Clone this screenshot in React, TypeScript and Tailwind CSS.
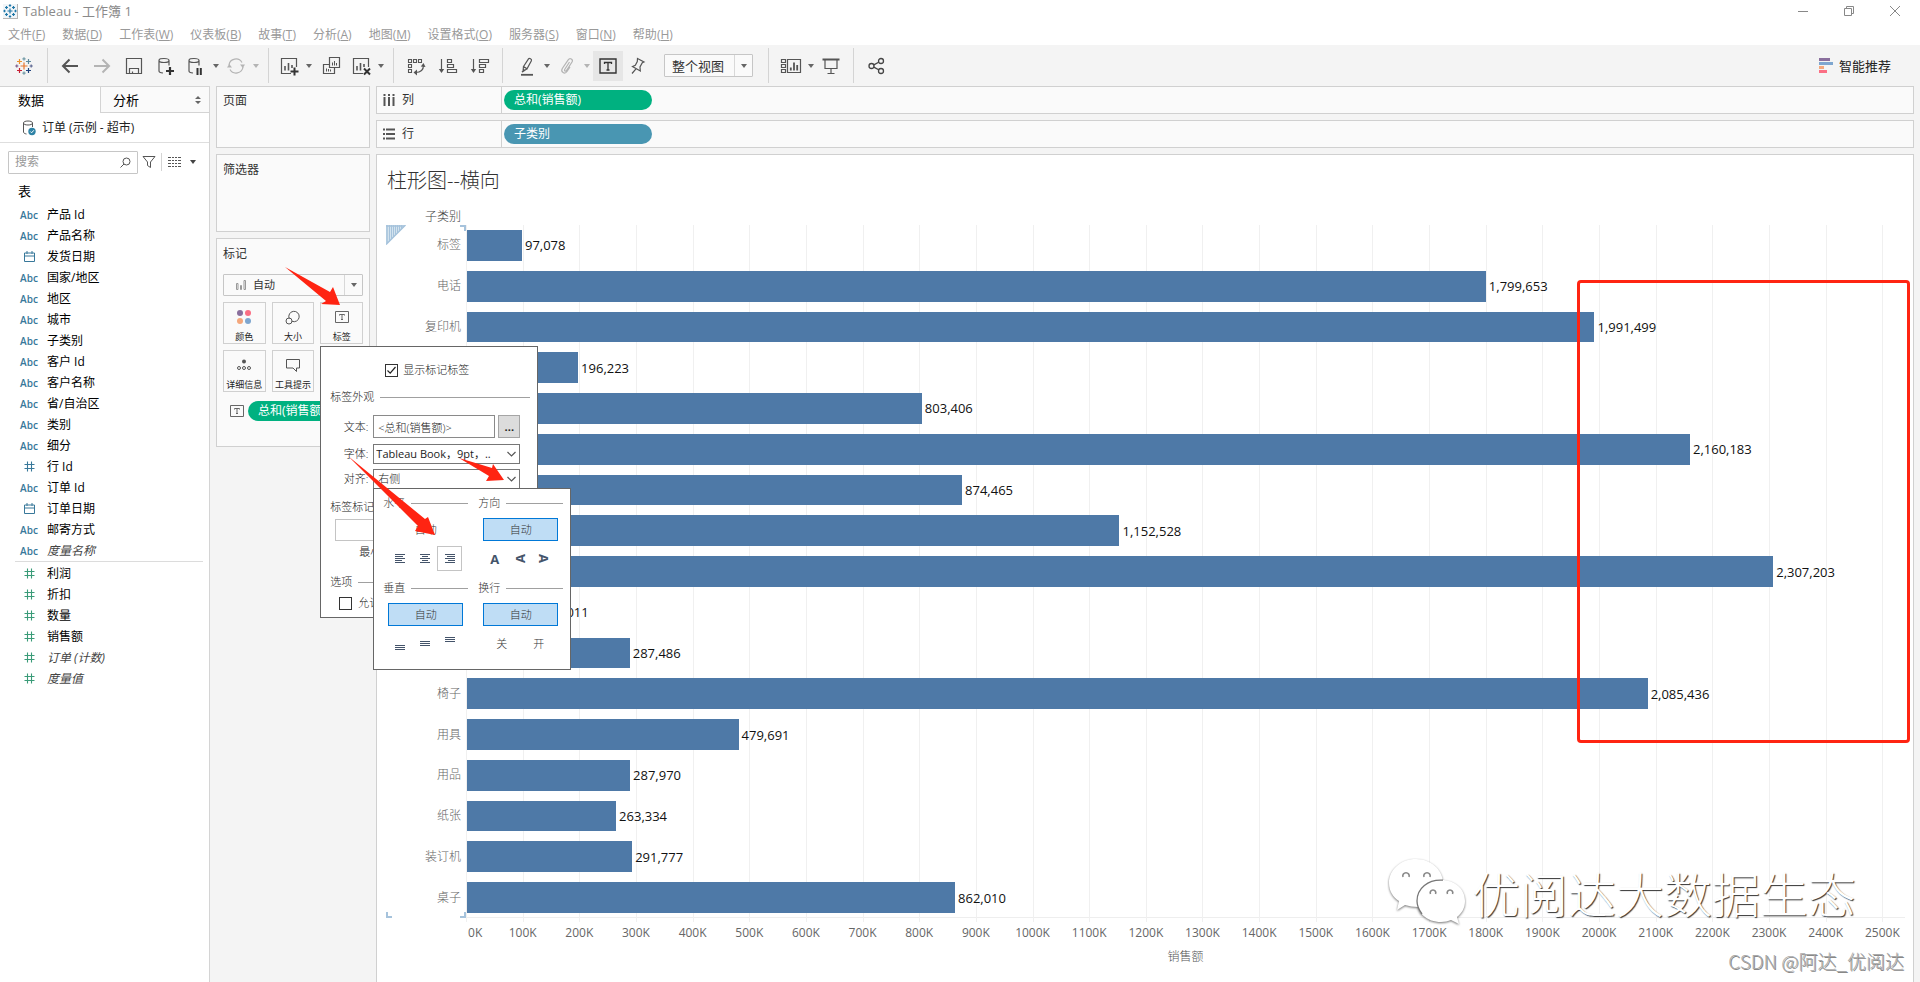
import type { ReactNode } from "react";

const MENUS: [string, string][] = [
  ["文件", "F"],
  ["数据", "D"],
  ["工作表", "W"],
  ["仪表板", "B"],
  ["故事", "T"],
  ["分析", "A"],
  ["地图", "M"],
  ["设置格式", "O"],
  ["服务器", "S"],
  ["窗口", "N"],
  ["帮助", "H"],
];

type FieldKind = "text" | "date" | "number";
type Field = { name: string; kind: FieldKind; italic?: boolean };

const DIMENSIONS: Field[] = [
  { name: "产品 Id", kind: "text" },
  { name: "产品名称", kind: "text" },
  { name: "发货日期", kind: "date" },
  { name: "国家/地区", kind: "text" },
  { name: "地区", kind: "text" },
  { name: "城市", kind: "text" },
  { name: "子类别", kind: "text" },
  { name: "客户 Id", kind: "text" },
  { name: "客户名称", kind: "text" },
  { name: "省/自治区", kind: "text" },
  { name: "类别", kind: "text" },
  { name: "细分", kind: "text" },
  { name: "行 Id", kind: "number" },
  { name: "订单 Id", kind: "text" },
  { name: "订单日期", kind: "date" },
  { name: "邮寄方式", kind: "text" },
  { name: "度量名称", kind: "text", italic: true },
];

const MEASURES: Field[] = [
  { name: "利润", kind: "number" },
  { name: "折扣", kind: "number" },
  { name: "数量", kind: "number" },
  { name: "销售额", kind: "number" },
  { name: "订单 (计数)", kind: "number", italic: true },
  { name: "度量值", kind: "number", italic: true },
];

const SALES: { name: string; value: number }[] = [
  { name: "标签", value: 97078 },
  { name: "电话", value: 1799653 },
  { name: "复印机", value: 1991499 },
  { name: "", value: 196223 },
  { name: "", value: 803406 },
  { name: "", value: 2160183 },
  { name: "", value: 874465 },
  { name: "", value: 1152528 },
  { name: "", value: 2307203 },
  { name: "", value: 125011 },
  { name: "", value: 287486 },
  { name: "椅子", value: 2085436 },
  { name: "用具", value: 479691 },
  { name: "用品", value: 287970 },
  { name: "纸张", value: 263334 },
  { name: "装订机", value: 291777 },
  { name: "桌子", value: 862010 },
];

const AXIS_MAX = 2540000;
const TICKS = Array.from({ length: 26 }, (_, i) => i * 100);
const pct = (v: number) => `${(v / AXIS_MAX) * 100}%`;

/* ---------- icons ---------- */

function Icon({ w = 20, h = 20, children, color = "text-[#555]" }: { w?: number; h?: number; children: ReactNode; color?: string }) {
  return (
    <svg width={w} height={h} viewBox={`0 0 ${w} ${h}`} fill="none" stroke="currentColor" className={`shrink-0 ${color}`} aria-hidden="true">
      {children}
    </svg>
  );
}

function Caret({ color = "text-[#666]" }: { color?: string }) {
  return (
    <svg width="6" height="4" viewBox="0 0 6 4" className={color} aria-hidden="true">
      <path d="M0 0h6L3 4z" fill="currentColor" />
    </svg>
  );
}

const crossPath = (x: number, y: number, r: number) => `M${x - r} ${y}h${2 * r}M${x} ${y - r}v${2 * r}`;

function TableauMark() {
  const crosses: [number, number, number, string][] = [
    [9, 9, 3.5, "#e8762d"],
    [4.5, 4.5, 2.5, "#eb912c"],
    [13.5, 4.5, 2.5, "#5b879b"],
    [4.5, 13.5, 2.5, "#c72035"],
    [13.5, 13.5, 2.5, "#1f447e"],
    [9, 1.8, 1.6, "#7099a6"],
    [9, 16.2, 1.6, "#7199a6"],
    [1.8, 9, 1.6, "#7c5a8a"],
    [16.2, 9, 1.6, "#5c6692"],
  ];
  return (
    <Icon w={18} h={18}>
      {crosses.map(([x, y, r, c]) => (
        <path key={`${x}-${y}`} d={crossPath(x, y, r)} stroke={c} strokeWidth="1.2" />
      ))}
    </Icon>
  );
}

function WindowMark() {
  const crosses: [number, number, number][] = [
    [7, 7, 2.5], [3.5, 3.5, 1.5], [10.5, 3.5, 1.5], [3.5, 10.5, 1.5], [10.5, 10.5, 1.5],
    [7, 1.5, 1.2], [7, 12.5, 1.2], [1.5, 7, 1.2], [12.5, 7, 1.2],
  ];
  return (
    <span className="flex size-[15px] items-center justify-center border-r border-b border-[#b5b5b5] bg-[#f1f5f8]">
      <Icon w={14} h={14} color="text-[#1f77a8]">
        {crosses.map(([x, y, r]) => (
          <path key={`${x}-${y}`} d={crossPath(x, y, r)} strokeWidth="1.2" />
        ))}
      </Icon>
    </span>
  );
}

const Back = () => (
  <Icon><path d="M18 10H3M9.5 3.5 3 10l6.5 6.5" strokeWidth="2" /></Icon>
);
const Forward = () => (
  <Icon color="text-[#b4b4b4]"><path d="M2 10h15M10.5 3.5 17 10l-6.5 6.5" strokeWidth="2" /></Icon>
);
const Save = () => (
  <Icon><path d="M2.5 2.5h15v15h-15zM5.5 17.5v-5h9v5M8.5 17.5v-2" strokeWidth="1.2" /></Icon>
);
const cylinder = "M3 4.5C3 3 5.200 2.500 8 2.500s5 .5 5 2-2.200 2-5 2-5-.5-5-2zM3 4.500v10.500c0 1.200 1.600 1.900 4 2M13 4.500v5";
const DbPlus = () => (
  <Icon><path d={cylinder} strokeWidth="1.200" /><path d="M14 11v8M10 15h8" stroke="#333" strokeWidth="2.200" /></Icon>
);
const DbPause = () => (
  <Icon><path d={cylinder} strokeWidth="1.200" /><path d="M11.500 12v7M14.800 12v7" stroke="#333" strokeWidth="2" /></Icon>
);
const Refresh = () => (
  <Icon color="text-[#b4b4b4]">
    <path d="M3 9a7 7 0 0 1 13-2.500M17 11a7 7 0 0 1-13 2.500" strokeWidth="1.200" />
    <path d="M14 8.500h5L16.800 12zM1 11.500h5L3.300 8z" fill="currentColor" stroke="none" />
  </Icon>
);
const NewSheet = () => (
  <Icon>
    <path d="M12 17.500H2.500v-15h15v8.500" strokeWidth="1.200" />
    <path d="M6 14.500V10M9.500 14.500V7M13 12V9" strokeWidth="1.600" />
    <path d="M15.500 11.500v8M11.500 15.500h8" stroke="#333" strokeWidth="2" />
  </Icon>
);
const Duplicate = () => (
  <Icon>
    <path d="M8.500 1.500h10v10h-10zM8 8.500H2.500v9h11v-5.500" strokeWidth="1.200" />
    <path d="M11.500 9.500v-3M13.500 9.500v-4.500M15.500 9.500V7M5.500 15.500v-3M7.500 15.500v-2.500M9.500 15.500v-2" strokeWidth="1" />
  </Icon>
);
const ClearSheet = () => (
  <Icon>
    <path d="M12 17.500H2.500v-15h15v8.500" strokeWidth="1.200" />
    <path d="M6 14.500V10M9.500 14.500V7M13 11V8" strokeWidth="1.600" />
    <path d="m13 12.500 6 6M19 12.500l-6 6" stroke="#333" strokeWidth="2" />
  </Icon>
);
const Swap = () => (
  <Icon>
    <path d="M2.500 3.500h3v3h-3zM7.500 3.500h3v3h-3zM12.500 3.500h3v3h-3zM2.500 8.500h3v3h-3zM2.500 13.500h3v3h-3z" strokeWidth="1.100" />
    <path d="M17.500 9c0 5-2.500 7.500-8 7.500" strokeWidth="1.200" />
    <path d="M14.800 10.500 17.500 7l2 4zM11 13.500v6l-3.500-3z" fill="currentColor" stroke="none" />
  </Icon>
);
const SortAsc = () => (
  <Icon>
    <path d="M3.500 3v12M9.500 3.500h4v3h-4zM9.500 8.500h6v3h-6zM9.500 13.500h9v3h-9z" strokeWidth="1.200" />
    <path d="M.8 13h5.400L3.500 17z" fill="currentColor" stroke="none" />
  </Icon>
);
const SortDesc = () => (
  <Icon>
    <path d="M3.500 3v12M9.500 3.500h9v3h-9zM9.500 8.500h6v3h-6zM9.500 13.500h4v3h-4z" strokeWidth="1.200" />
    <path d="M.8 13h5.400L3.500 17z" fill="currentColor" stroke="none" />
  </Icon>
);
const Pen = () => (
  <Icon>
    <path d="M8.500 10.500 13.500 2.800c.8-1.200 3.600.6 2.900 1.900L12 12.800zM8.500 10.500 8 15.500l4-2.700M9.500 13.500 7 16" strokeWidth="1.200" />
    <path d="M6 18.800h12" strokeWidth="1.800" />
  </Icon>
);
const Clip = () => (
  <Icon color="text-[#b4b4b4]">
    <path d="M12.500 6 7.800 13.300c-1 1.600.9 2.600 1.800 1.100L15 6c1.500-2.500-2-4.800-3.800-2.200L5.300 12.500c-2 3.300 2.400 6.300 4.700 3l3-4.600" strokeWidth="1.200" />
  </Icon>
);
const TextBox = ({ color = "text-[#333]" }: { color?: string }) => (
  <Icon w={18} h={16} color={color}>
    <path d="M1 1h16v14H1z" strokeWidth="1.400" />
    <path d="M5.500 6V4.500h7V6M9 4.500v7.500M7.500 12h3" strokeWidth="1.300" />
  </Icon>
);
const SmallTextBox = () => (
  <Icon w={14} h={12} color="text-[#666]">
    <path d="M.5.5h13v11H.5z" />
    <path d="M4.500 4.500v-1h5v1M7 3.500v5M6 8.500h2" />
  </Icon>
);
const Pin = () => (
  <Icon>
    <path d="m8.500 2.500 6.500 3.500-1.700.8-2.300 4.200.3 4-7.800-4.500 2.800-1.300 2-3.700zM7 12.800 3 17.500" strokeWidth="1.200" />
  </Icon>
);
const Cards = () => (
  <Icon w={22} h={20}>
    <path d="M1.500 3.500h4v3h-4zM1.500 8.500h4v3h-4zM1.500 13.500h4v3h-4zM7.500 3.500h13v13h-13z" strokeWidth="1.200" />
    <path d="M10.800 14.500v-3M14 14.500V6.500M17.200 14.500V9" strokeWidth="1.800" />
  </Icon>
);
const Present = () => (
  <Icon>
    <path d="M1.500 3.500h17" strokeWidth="2" />
    <path d="M4 4v8.500h12V4M10 12.500v5M6.500 17.500h7" strokeWidth="1.200" />
  </Icon>
);
const Share = () => (
  <Icon color="text-[#444]">
    <circle cx="5.500" cy="10" r="2.500" strokeWidth="1.300" />
    <circle cx="15" cy="5" r="2.500" strokeWidth="1.300" />
    <circle cx="15" cy="15" r="2.500" strokeWidth="1.300" />
    <path d="m7.800 8.900 4.900-2.700M7.800 11.100l4.900 2.700" strokeWidth="1.300" />
  </Icon>
);

/* ---------- window chrome ---------- */

function TitleBar() {
  return (
    <header className="flex h-[22px] items-center justify-between pl-[3px] pr-[19px] text-[#8a8a8a]">
      <div className="flex items-center gap-[5px] text-[13px] leading-[20px]">
        <WindowMark />
        <h1>Tableau - 工作簿 1</h1>
      </div>
      <div className="flex gap-[34px]">
        <button aria-label="最小化"><Icon w={12} h={12} color="text-[#888]"><path d="M1 6.500h10" /></Icon></button>
        <button aria-label="还原"><Icon w={12} h={12} color="text-[#888]"><path d="M1.500 3.500h7v7h-7zM3.500 3.500v-2h7v7h-2" /></Icon></button>
        <button aria-label="关闭"><Icon w={12} h={12} color="text-[#888]"><path d="m1 1 10 10M11 1 1 11" /></Icon></button>
      </div>
    </header>
  );
}

function MenuBar() {
  return (
    <nav className="flex h-[23px] items-center gap-[17px] pl-2 pt-[2px] text-xs text-[#999]">
      {MENUS.map(([label, key]) => (
        <button key={key} className="whitespace-nowrap">
          {label}(<u>{key}</u>)
        </button>
      ))}
    </nav>
  );
}

const Separator = () => <span className="mx-[6px] h-[35px] w-px shrink-0 bg-[#d4d4d4]" />;

function Tool({ label, wide = false, children }: { label: string; wide?: boolean; children: ReactNode }) {
  return (
    <button aria-label={label} className={`flex h-[30px] shrink-0 items-center justify-center ${wide ? "w-8" : "w-7"}`}>
      {children}
    </button>
  );
}

function Drop({ muted = false }: { muted?: boolean }) {
  return (
    <button aria-label="更多" className="flex h-[30px] w-3 shrink-0 items-center justify-center">
      <Caret color={muted ? "text-[#b4b4b4]" : "text-[#666]"} />
    </button>
  );
}

function Toolbar() {
  return (
    <div className="flex h-[41px] items-center bg-[#f4f4f4] pr-[29px]">
      <button aria-label="起始页" className="flex w-[47px] shrink-0 justify-center"><TableauMark /></button>
      <span className="mr-[6px] h-[35px] w-px bg-[#d4d4d4]" />
      <Tool label="后退" wide><Back /></Tool>
      <Tool label="前进" wide><Forward /></Tool>
      <Tool label="保存" wide><Save /></Tool>
      <Tool label="新建数据源" wide><DbPlus /></Tool>
      <Tool label="暂停自动更新"><DbPause /></Tool>
      <Drop />
      <Tool label="刷新"><Refresh /></Tool>
      <Drop muted />
      <Separator />
      <Tool label="新建工作表"><NewSheet /></Tool>
      <Drop />
      <Tool label="复制" wide><Duplicate /></Tool>
      <Tool label="清除工作表"><ClearSheet /></Tool>
      <Drop />
      <Separator />
      <Tool label="交换行和列" wide><Swap /></Tool>
      <Tool label="升序排序" wide><SortAsc /></Tool>
      <Tool label="降序排序" wide><SortDesc /></Tool>
      <Separator />
      <Tool label="突出显示" wide><Pen /></Tool>
      <Drop />
      <Tool label="对成员进行分组"><Clip /></Tool>
      <Drop muted />
      <button aria-label="显示标记标签" className="flex size-[30px] shrink-0 items-center justify-center bg-[#e6e6e6]"><TextBox /></button>
      <Tool label="固定轴" wide><Pin /></Tool>
      <div className="relative ml-[9px] mr-[9px] flex h-[23px] w-[89px] shrink-0 items-stretch rounded-[1px] border border-[#c6c6c6] bg-[#fafafa]">
        <select aria-label="适合" className="w-full appearance-none pl-[7px] text-[13px] leading-[20px] text-[#333]">
          <option>整个视图</option>
        </select>
        <span className="pointer-events-none absolute inset-y-0 right-0 flex w-[18px] items-center justify-center border-l border-[#d8d8d8]"><Caret /></span>
      </div>
      <Separator />
      <div className="flex px-[2px]">
        <Tool label="显示/隐藏卡"><Cards /></Tool>
        <Drop />
        <Tool label="演示模式"><Present /></Tool>
      </div>
      <Separator />
      <Tool label="共享工作簿" wide><Share /></Tool>
      <button className="ml-auto flex shrink-0 items-center gap-[6px] text-[13px] leading-[20px] text-[#222]">
        <svg width="14" height="15" viewBox="0 0 14 15" aria-hidden="true">
          <path d="M0 0h11v3H0z" fill="#8a6f9d" />
          <path d="M0 4h14v3H0z" fill="#7ea6cf" />
          <path d="M0 8h5v3H0z" fill="#f4a77c" />
          <path d="M0 12h8v3H0z" fill="#fb6f84" />
        </svg>
        智能推荐
      </button>
    </div>
  );
}

/* ---------- data pane ---------- */

function FieldIcon({ kind, tone }: { kind: FieldKind; tone: string }) {
  if (kind === "text") return <span className={`text-[10px] font-semibold leading-[12px] ${tone}`}>Abc</span>;
  if (kind === "date")
    return (
      <Icon w={11} h={11} color={tone}>
        <path d="M.5 2h10v8.500H.5zM.5 5h10M3 0v3M8 0v3" />
      </Icon>
    );
  return (
    <Icon w={11} h={11} color={tone}>
      <path d="M.5 3.500h10M.5 7.500h10M3.500 .5v10M7.500 .5v10" strokeWidth="1.100" />
    </Icon>
  );
}

function FieldList({ fields, tone }: { fields: Field[]; tone: string }) {
  return (
    <ul className="text-xs">
      {fields.map((f) => (
        <li key={f.name} className="flex h-[21px] items-center gap-1 pl-[15px]">
          <span className="flex w-7 items-center justify-center"><FieldIcon kind={f.kind} tone={tone} /></span>
          <span className={f.italic ? "italic text-[#444]" : "text-black"}>{f.name}</span>
        </li>
      ))}
    </ul>
  );
}

function DataPane() {
  return (
    <aside className="flex w-[210px] shrink-0 flex-col border-r border-[#d4d4d4] bg-white">
      <div className="flex h-[27px] text-[13px] leading-[20px] text-black">
        <button className="w-[100px] shrink-0 border-t border-[#d4d4d4] pl-[18px] text-left">数据</button>
        <button className="flex flex-1 items-center justify-between border-b border-l border-t border-[#d4d4d4] bg-[#fafafa] pl-3 pr-2">
          分析
          <svg width="6" height="8" viewBox="0 0 6 8" className="text-[#666]" aria-hidden="true">
            <path d="M0 3h6L3 0zM0 5h6L3 8z" fill="currentColor" />
          </svg>
        </button>
      </div>
      <div className="flex h-[30px] items-center gap-[5px] border-b border-[#dedede] pl-[21px] text-xs text-[#222]">
        <Icon w={16} h={16}>
          <path d="M2.500 3c0-1.300 1.800-2 4.500-2s4.500.7 4.500 2-1.800 2-4.500 2-4.500-.7-4.500-2zM2.500 3v9c0 1 1.200 1.700 3 2M11.500 3v4" />
          <circle cx="11" cy="11.500" r="3.700" fill="#2e83a6" stroke="none" />
          <path d="m9.300 11.500 1.300 1.300 2.200-2.500" stroke="#fff" />
        </Icon>
        订单 (示例 - 超市)
      </div>
      <div className="flex h-[38px] items-center pl-2">
        <label className="flex h-[23px] w-[130px] items-center rounded-[1px] border border-[#c6c6c6] pl-[6px] pr-[6px]">
          <input aria-label="搜索" placeholder="搜索" className="w-full min-w-0 text-xs outline-none placeholder:text-[#999]" />
          <Icon w={11} h={11}><circle cx="6.500" cy="4.500" r="3.500" /><path d="M4 7 .5 10.500" /></Icon>
        </label>
        <button aria-label="筛选" className="ml-1">
          <Icon w={14} h={14}><path d="M1 1.500h12L8.500 7v5.500l-3-2V7z" /></Icon>
        </button>
        <span className="ml-[5px] h-[18px] w-px bg-[#d4d4d4]" />
        <button aria-label="视图" className="ml-[6px] flex items-center gap-[9px]">
          <Icon w={13} h={10}><path d="M0 .5h13M0 3.500h13M0 6.500h13M0 9.500h13" strokeDasharray="3 1 2 1 2 1 3" /></Icon>
          <Caret color="text-[#444]" />
        </button>
      </div>
      <h2 className="pl-[18px] text-[13px] leading-[20px] text-black">表</h2>
      <div className="pt-[3px]">
        <FieldList fields={DIMENSIONS} tone="text-[#38789a]" />
        <hr className="mb-px ml-[15px] mr-[6px] border-[#dcdcdc]" />
        <FieldList fields={MEASURES} tone="text-[#3a9b78]" />
      </div>
    </aside>
  );
}

/* ---------- label dialogs ---------- */

function Legend({ children }: { children: ReactNode }) {
  return (
    <div className="flex h-[14px] items-center gap-[6px]">
      <span className="shrink-0">{children}</span>
      <span className="h-px flex-1 bg-[#a0a0a0]" />
    </div>
  );
}

function AutoButton({ plain = false }: { plain?: boolean }) {
  return (
    <button className={`ml-[5px] mt-2 h-[23px] w-[75px] border ${plain ? "border-transparent" : "border-[#0078d7] bg-[#bfddf5]"}`}>自动</button>
  );
}

const ALIGN_LINES = [
  "M0 .5h10M0 2.500h8M0 4.500h10M0 6.500h7M0 8.500h10",
  "M0 .5h10M2 2.500h6M0 4.500h10M2 6.500h6M0 8.500h10",
  "M0 .5h10M2 2.500h8M0 4.500h10M3 6.500h7M0 8.500h10",
];

function AlignmentPopup() {
  return (
    <div className="absolute left-[52px] top-[141px] z-10 grid h-[182px] w-[198px] grid-cols-[85px_85px] content-start gap-x-[10px] border border-[#666] bg-white px-[9px] pt-[7px] font-light text-[#333]">
      <section className="h-[85px]">
        <Legend>水平</Legend>
        <AutoButton plain />
        <div className="mt-[5px] flex pl-1">
          {ALIGN_LINES.map((d, i) => (
            <button key={d} aria-label={["左侧", "居中", "右侧"][i]} className={`flex size-[25px] items-center justify-center border ${i === 2 ? "border-[#c4c4c4]" : "border-transparent"}`}>
              <Icon w={10} h={9} color="text-[#44546a]"><path d={d} /></Icon>
            </button>
          ))}
        </div>
      </section>
      <section className="h-[85px]">
        <Legend>方向</Legend>
        <AutoButton />
        <div className="mt-[5px] flex pl-1 text-[13px] font-bold leading-[20px] text-[#44546a]">
          <button className="size-[25px]">A</button>
          <button className="size-[25px] -rotate-90">A</button>
          <button className="size-[25px] rotate-90">A</button>
        </div>
      </section>
      <section>
        <Legend>垂直</Legend>
        <AutoButton />
        <div className="mt-[5px] flex pl-1">
          {["items-end", "items-center", "items-start"].map((a, i) => (
            <button key={a} aria-label={["底部", "中部", "顶部"][i]} className={`flex size-[25px] justify-center py-[6px] ${a}`}>
              <Icon w={10} h={5} color="text-[#44546a]"><path d="M0 .5h10M0 2.500h10M0 4.500h10" /></Icon>
            </button>
          ))}
        </div>
      </section>
      <section>
        <Legend>换行</Legend>
        <AutoButton />
        <div className="mt-[5px] flex h-[25px] items-center gap-[26px] pl-[18px]">
          <button>关</button>
          <button>开</button>
        </div>
      </section>
    </div>
  );
}

function Chevron() {
  return (
    <span className="pointer-events-none absolute inset-y-0 right-1 flex items-center">
      <Icon w={9} h={6}><path d="m.5 1 4 4 4-4" strokeWidth="1.200" /></Icon>
    </span>
  );
}

function LabelDialog() {
  return (
    <div className="absolute left-0 top-[44px] z-10 h-[272px] w-[218px] border border-[#666] bg-white pl-[9px] pr-[7px] text-left text-[11px] leading-[14px] text-[#222]">
      <div className="font-light">
        <label className="flex items-center gap-[6px] pl-[55px] pt-4">
          <input type="checkbox" defaultChecked className="size-[13px] appearance-none border border-[#333]" />
          <svg width="11" height="11" viewBox="0 0 11 11" className="-ml-[18px] text-[#222]" aria-hidden="true">
            <path d="m1.500 5.500 2.700 2.700L9.500 2" fill="none" stroke="currentColor" strokeWidth="1.200" />
          </svg>
          显示标记标签
        </label>
        <div className="mt-[13px]"><Legend>标签外观</Legend></div>
        <div className="mt-[11px] grid grid-cols-[38px_147px] items-center gap-x-[5px]">
          <label htmlFor="label-text" className="text-right">文本:</label>
          <div className="flex gap-[3px]">
            <input id="label-text" defaultValue="<总和(销售额)>" className="h-[23px] w-[122px] border border-[#8a8a8a] pl-1" />
            <button aria-label="编辑文本" className="h-[23px] w-[22px] border border-[#a5a5a5] bg-[#dcdcdc] text-[11px] font-bold leading-[14px]">...</button>
          </div>
          <label htmlFor="label-font" className="pt-[6px] text-right">字体:</label>
          <div className="relative mt-[6px]">
            <select id="label-font" className="h-5 w-full appearance-none border border-[#777] pl-[2px] font-normal">
              <option>Tableau Book，9pt，..</option>
            </select>
            <Chevron />
          </div>
          <label htmlFor="label-align" className="pt-[5px] text-right">对齐:</label>
          <div className="relative mt-[5px]">
            <select id="label-align" className="h-5 w-full appearance-none border border-[#777] pl-1">
              <option>右侧</option>
            </select>
            <Chevron />
          </div>
        </div>
        <div className="mt-[11px]">标签标记</div>
        <div className="ml-[5px] mt-[5px] h-[22px] w-[60px] border border-[#c4c4c4]" />
        <div className="mt-1 pl-[29px]">最小</div>
        <div className="mt-4"><Legend>选项</Legend></div>
        <label className="flex items-center gap-[6px] pl-[9px] pt-[7px]">
          <input type="checkbox" className="size-[13px] appearance-none border border-[#333]" />
          允许
        </label>
      </div>
      <AlignmentPopup />
      <svg width="224" height="274" viewBox="284 266 224 274" className="pointer-events-none absolute left-[-38px] top-[-82px] z-20" aria-hidden="true">
        <g fill="#ff2412">
          <path d="M286 268 331 293 334 288 341 306 322 305 327 302z" />
          <path d="M460 459 493 469 494 465 505 481 487 482 490 477z" />
          <path d="M349 457 426 520 429 518 436 536 416 532 419 527z" />
        </g>
      </svg>
    </div>
  );
}

/* ---------- cards ---------- */

function MarkButton({ label, icon }: { label: string; icon: ReactNode }) {
  return (
    <button className="flex h-[42px] w-full flex-col items-center justify-between whitespace-nowrap border border-[#d0d0d0] bg-[#fafafa] pt-[6px] text-[9px] leading-[13px] text-[#222]">
      <span className="flex h-4 items-center">{icon}</span>
      {label}
    </button>
  );
}

function CardColumn() {
  return (
    <div className="flex w-[166px] shrink-0 flex-col gap-[6px] px-[6px] text-xs text-[#333]">
      <section className="h-[62px] border border-[#d0d0d0] bg-[#fafafa] pl-[6px] pt-[6px]">页面</section>
      <section className="h-[78px] border border-[#d0d0d0] bg-[#fafafa] pl-[6px] pt-[7px]">筛选器</section>
      <section className="h-[209px] border border-[#d0d0d0] bg-[#fafafa] px-[6px] pt-[7px]">
        <h2>标记</h2>
        <div className="relative mt-3 h-[22px] rounded-[1px] border border-[#c6c6c6]">
          <span className="pointer-events-none absolute inset-y-0 left-[12px] flex items-center">
            <Icon w={10} h={10} color="text-[#999]"><path d="M.5 3.500h1.500v6H.5zM4.500 5.500h1v4h-1zM8 .5h1.500v9H8z" /></Icon>
          </span>
          <select aria-label="标记类型" className="h-full w-full appearance-none pl-[29px] text-[11px] leading-[14px]">
            <option>自动</option>
          </select>
          <span className="pointer-events-none absolute inset-y-0 right-0 flex w-[18px] items-center justify-center border-l border-[#d8d8d8]"><Caret /></span>
        </div>
        <div className="mt-[6px] grid grid-cols-3 gap-[6px]">
          <MarkButton
            label="颜色"
            icon={
              <svg width="14" height="14" viewBox="0 0 14 14" aria-hidden="true">
                <circle cx="3" cy="3" r="3" fill="#8a6f9d" />
                <circle cx="11" cy="3" r="3" fill="#fb6f84" />
                <circle cx="3" cy="11" r="3" fill="#f4a77c" />
                <circle cx="11" cy="11" r="3" fill="#7ea6cf" />
              </svg>
            }
          />
          <MarkButton
            label="大小"
            icon={<Icon w={15} h={15}><path d="M4.200 8.500A5.200 5.200 0 1 1 7 11.300" /><circle cx="4" cy="11" r="3" /></Icon>}
          />
          <div className="relative">
            <MarkButton label="标签" icon={<SmallTextBox />} />
            <LabelDialog />
          </div>
          <MarkButton
            label="详细信息"
            icon={
              <Icon w={14} h={12}>
                <circle cx="7" cy="2.500" r="2" fill="currentColor" stroke="none" />
                <circle cx="2" cy="9" r="1.500" /><circle cx="7" cy="9" r="1.500" /><circle cx="12" cy="9" r="1.500" />
              </Icon>
            }
          />
          <MarkButton
            label="工具提示"
            icon={<Icon w={14} h={13}><path d="M.5.5h13v8.500h-3v3.500L7 9H.5z" /></Icon>}
          />
        </div>
        <div className="mt-[9px] flex items-center gap-1 pl-[7px]">
          <SmallTextBox />
          <span className="h-5 flex-1 whitespace-nowrap rounded-full bg-[#00b180] pl-[10px] leading-[20px] text-white">总和(销售额)</span>
        </div>
      </section>
    </div>
  );
}

/* ---------- sheet ---------- */

function Shelf({ label, icon, pill, tone }: { label: string; icon: ReactNode; pill: string; tone: string }) {
  return (
    <div className="flex h-7 items-stretch border border-[#d0d0d0] bg-[#fafafa] text-xs">
      <div className="flex w-[125px] items-center gap-[7px] border-r border-[#d0d0d0] pl-[6px] text-[#333]">
        {icon}
        {label}
      </div>
      <button className={`ml-[2px] h-5 w-[148px] self-center rounded-full pl-[10px] text-left leading-[20px] text-white ${tone}`}>{pill}</button>
    </div>
  );
}

function Chart() {
  return (
    <figure className="flex flex-1 flex-col pl-[9px] pr-[8px]">
      <figcaption className="w-[75px] text-right text-xs font-light text-[#444]">子类别</figcaption>
      <div className="relative flex flex-1 flex-col">
        <div className="pointer-events-none absolute inset-y-0 left-[80px] right-0 border-b border-[#eeeeee]">
          {TICKS.map((t) => (
            <span key={t} className="absolute top-0 bottom-[-5px] w-px bg-[#f0f0f0]" style={{ left: pct(t * 1000) }} />
          ))}
        </div>
        <svg width="20" height="20" viewBox="0 0 20 20" className="absolute left-0 top-0" aria-hidden="true">
          <path d="M0 0h20L0 20z" fill="#d3e3ee" />
          <path d="M3.500 0v16M5.500 0v14M7.500 0v12M9.500 0v10M11.500 0v8M13.500 0v6M15.500 0v4" stroke="#a6c3dc" />
          <path d="M0 1h19M1 0v18M19.500 0 0 19.500" stroke="#a6c3dc" strokeWidth="1.500" />
        </svg>
        <span className="absolute left-[74px] top-0 size-[6px] border-r-2 border-t-2 border-[#a6c3dc]" />
        <span className="absolute bottom-0 left-0 size-[6px] border-b-2 border-l-2 border-[#a6c3dc]" />
        <span className="absolute bottom-0 left-[74px] size-[6px] border-b-2 border-r-2 border-[#a6c3dc]" />
        {SALES.map((row) => (
          <div key={row.value} className="relative flex flex-1 items-stretch">
            <span className="w-[81px] shrink-0 self-center pr-[6px] text-right text-xs font-light text-[#666]">{row.name}</span>
            <div className="flex flex-1 items-stretch py-[5px]">
              <div className="shrink-0 bg-[#4e79a7]" style={{ width: pct(row.value) }} />
              <span className="self-center pl-[3px] text-[13px] leading-[16px] text-[#111]">{row.value.toLocaleString("en-US")}</span>
            </div>
          </div>
        ))}
      </div>
      <div className="relative ml-[80px] mt-[7px] h-4 text-xs text-[#666]">
        {TICKS.map((t) => (
          <span key={t} className={`absolute ${t === 0 ? "pl-[2px]" : "-translate-x-1/2"}`} style={{ left: pct(t * 1000) }}>
            {t}K
          </span>
        ))}
      </div>
      <div className="mb-[17px] ml-[80px] mt-2 text-center text-xs font-light text-[#555]">销售额</div>
    </figure>
  );
}

function Watermark() {
  return (
    <div className="pointer-events-none absolute bottom-[7px] right-[6px] flex flex-col items-end font-['Noto_Sans_CJK_SC',sans-serif]">
      <div className="mr-[58px] flex h-[60px] items-center gap-[5px]">
        <svg width="80" height="70" viewBox="0 0 80 70" className="shrink-0 overflow-visible drop-shadow-[0_1px_1px_rgba(0,0,0,0.55)]" aria-hidden="true">
          <path d="M29 2C14 2 2 12.500 2 26c0 8 4 14 10 18l-2 9 8-5c4 1 8 2 13 2 14-1 25-11 25-24S44 2 29 2z" fill="#fff" />
          <path d="M54 23c-14 0-24 9-24 21s10 21 24 21c4 0 7-1 10-2l8 4-2-7c5-4 8-9 8-16 0-12-10-21-24-21z" fill="#fff" />
          <path d="M56 23.200c-15-1-26 8-26 20.800 0 5 2 9 5 13" fill="none" stroke="#777" strokeWidth="1.300" />
          <g fill="none" stroke="#888" strokeWidth="1.600">
            <path d="M16 20a3.200 3.200 0 1 1 6 0M37 20a3.200 3.200 0 1 1 6 0M43.500 37a2.800 2.800 0 1 1 5 0M60.500 37a2.800 2.800 0 1 1 5 0" />
          </g>
        </svg>
        <span className="text-[48px] font-light leading-[60px] text-white [text-shadow:1px_1px_1px_#333]">优阅达大数据生态</span>
      </div>
      <span className="mt-[25px] pr-[10px] text-[19px] font-light leading-[28px] text-[#aaa] [text-shadow:1px_1px_0_#888]">CSDN @阿达_优阅达</span>
    </div>
  );
}

export default function App() {
  return (
    <div className="relative flex min-h-screen flex-col overflow-hidden bg-white font-['Open_Sans','Noto_Sans_CJK_SC',sans-serif]">
      <TitleBar />
      <MenuBar />
      <Toolbar />
      <div className="flex flex-1 bg-[#f4f4f4]">
        <DataPane />
        <CardColumn />
        <main className="relative flex min-w-0 flex-1 flex-col gap-[6px] pr-[6px]">
          <Shelf
            label="列"
            pill="总和(销售额)"
            tone="bg-[#00b180]"
            icon={<Icon w={12} h={12}><path d="M1.500 0v2M6 0v2M10.500 0v2M1.500 3v9M6 3v9M10.500 3v9" strokeWidth="2" /></Icon>}
          />
          <Shelf
            label="行"
            pill="子类别"
            tone="bg-[#4996b2]"
            icon={<Icon w={12} h={12}><path d="M0 1.500h2M0 6h2M0 10.500h2M3 1.500h9M3 6h9M3 10.500h9" strokeWidth="2" /></Icon>}
          />
          <section className="relative flex flex-1 flex-col border border-b-0 border-[#d0d0d0] bg-white">
            <h2 className="h-[54px] pl-[10px] pt-3 text-[20px] font-light leading-[28px] text-[#333]">柱形图--横向</h2>
            <Chart />
            <div className="pointer-events-none absolute right-[3px] top-[125px] h-[463px] w-[333px] rounded-[4px] border-[3px] border-[#ff2412]" />
          </section>
          <Watermark />
        </main>
      </div>
    </div>
  );
}
